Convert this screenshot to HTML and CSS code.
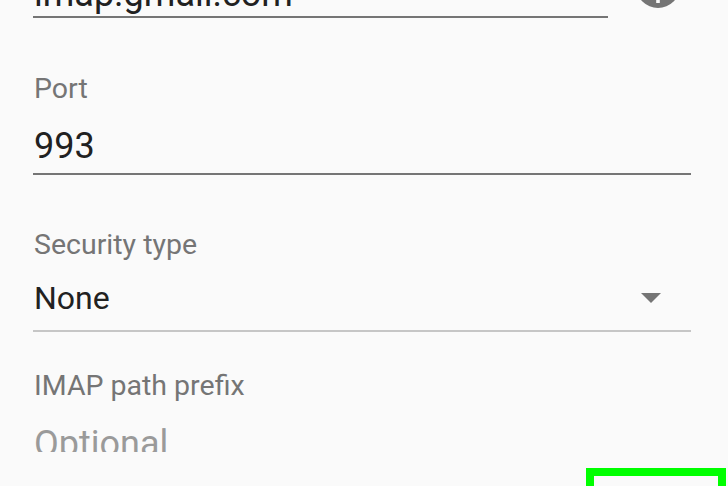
FILE: index.html
```html
<!DOCTYPE html>
<html lang="en">
<head>
<meta charset="utf-8">
<title>Incoming server settings</title>
<link rel="stylesheet" href="styles.css">
</head>
<body>
<main class="scroll">
  <div class="form">
    <div class="field field-server">
      <div class="server-row">
        <div class="input value">imap.gmail.com</div>
        <svg class="info-icon" width="44" height="44" viewBox="0 0 44 44" aria-hidden="true">
          <circle cx="22" cy="22" r="22" fill="#757575"/>
          <rect x="20.2" y="20" width="3.6" height="19" fill="#fafafa"/>
          <rect x="20.2" y="10" width="3.6" height="4" fill="#fafafa"/>
        </svg>
      </div>
    </div>

    <div class="field field-port">
      <div class="label">Port</div>
      <div class="input value">993</div>
    </div>

    <div class="field field-security">
      <div class="label">Security type</div>
      <div class="spinner">
        <span class="spinner-text">None</span>
        <span class="spinner-arrow"></span>
      </div>
    </div>

    <div class="field field-prefix">
      <div class="label">IMAP path prefix</div>
      <div class="input hint">Optional</div>
    </div>
  </div>
</main>
<footer class="footer">
  <div class="highlight"></div>
</footer>
</body>
</html>
```

FILE: styles.css
```css
html, body {
  margin: 0;
  padding: 0;
}

body {
  width: 728px;
  height: 486px;
  overflow: hidden;
  background: #fafafa;
  font-family: Roboto, "Noto Sans", "Liberation Sans", sans-serif;
  display: flex;
  flex-direction: column;
}

.scroll {
  height: 452px;
  overflow: hidden;
  flex: none;
}

.form {
  margin-top: -36px;
  padding: 0 37px 0 33px;
  display: flex;
  flex-direction: column;
}

.field {
  display: flex;
  flex-direction: column;
}

.label {
  font-size: 28.5px;
  line-height: 32px;
  color: #757575;
  padding-left: 1px;
}

.input {
  font-size: 36px;
  line-height: 44px;
  padding-left: 1px;
  padding-bottom: 5px;
  border-bottom: 2px solid #757575;
  white-space: nowrap;
}

.value {
  color: #212121;
}

.hint {
  color: #9a9a9a;
}

/* server row */
.server-row {
  display: flex;
  align-items: flex-end;
}

.server-row .input {
  flex: 1;
  padding-bottom: 0;
}

.info-icon {
  flex: none;
  margin: 0 11px 10px 28px;
}

/* port */
.field-port {
  margin-top: 55px;
}

.field-port .label {
  margin-bottom: 19px;
}

/* security */
.field-security {
  margin-top: 54px;
}

.field-security .label {
  margin-bottom: 15px;
}

.spinner {
  display: flex;
  align-items: center;
  justify-content: space-between;
  padding: 0 30px 10px 1px;
  border-bottom: 2px solid #c6c6c6;
}

.spinner-text {
  font-size: 32px;
  line-height: 44px;
  color: #212121;
}

.spinner-arrow {
  width: 0;
  height: 0;
  border-left: 10px solid transparent;
  border-right: 10px solid transparent;
  border-top: 10px solid #757575;
}

/* prefix */
.field-prefix {
  margin-top: 38px;
}

.field-prefix .label {
  margin-bottom: 20px;
}

/* footer with highlight */
.footer {
  flex: 1;
  display: flex;
  justify-content: flex-end;
  padding: 16px 2px 0 0;
  overflow: hidden;
}

.highlight {
  box-sizing: border-box;
  width: 140px;
  height: 40px;
  border: 8px solid #00ff00;
  flex: none;
}
```
